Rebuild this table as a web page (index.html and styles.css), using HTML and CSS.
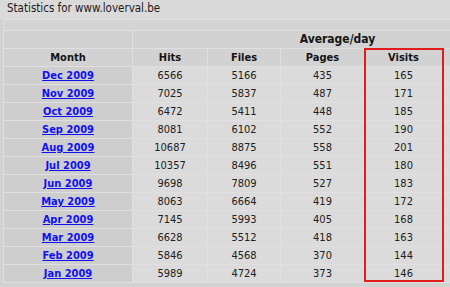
FILE: index.html
```html
<!DOCTYPE html>
<html>
<head>
<meta charset="utf-8">
<link rel="stylesheet" href="styles.css">
</head>
<body>
<div class="page">
  <div class="title">Statistics for www.loverval.be</div>
  <table class="stats">
    <colgroup>
      <col class="c-month"><col class="c-hits"><col class="c-files"><col class="c-pages"><col class="c-visits"><col class="c-extra">
    </colgroup>
    <tr class="r-top"><th colspan="6"></th></tr>
    <tr class="r-group">
      <th class="month-h"></th>
      <th colspan="5" class="group">Average/day</th>
    </tr>
    <tr class="r-head">
      <th class="month-h">Month</th>
      <th>Hits</th>
      <th>Files</th>
      <th>Pages</th>
      <th>Visits</th>
      <th></th>
    </tr>
    <tr><td class="m"><a href="#">Dec 2009</a></td><td>6566</td><td>5166</td><td>435</td><td>165</td><td></td></tr>
    <tr><td class="m"><a href="#">Nov 2009</a></td><td>7025</td><td>5837</td><td>487</td><td>171</td><td></td></tr>
    <tr><td class="m"><a href="#">Oct 2009</a></td><td>6472</td><td>5411</td><td>448</td><td>185</td><td></td></tr>
    <tr><td class="m"><a href="#">Sep 2009</a></td><td>8081</td><td>6102</td><td>552</td><td>190</td><td></td></tr>
    <tr><td class="m"><a href="#">Aug 2009</a></td><td>10687</td><td>8875</td><td>558</td><td>201</td><td></td></tr>
    <tr><td class="m"><a href="#">Jul 2009</a></td><td>10357</td><td>8496</td><td>551</td><td>180</td><td></td></tr>
    <tr><td class="m"><a href="#">Jun 2009</a></td><td>9698</td><td>7809</td><td>527</td><td>183</td><td></td></tr>
    <tr><td class="m"><a href="#">May 2009</a></td><td>8063</td><td>6664</td><td>419</td><td>172</td><td></td></tr>
    <tr><td class="m"><a href="#">Apr 2009</a></td><td>7145</td><td>5993</td><td>405</td><td>168</td><td></td></tr>
    <tr><td class="m"><a href="#">Mar 2009</a></td><td>6628</td><td>5512</td><td>418</td><td>163</td><td></td></tr>
    <tr><td class="m"><a href="#">Feb 2009</a></td><td>5846</td><td>4568</td><td>370</td><td>144</td><td></td></tr>
    <tr><td class="m"><a href="#">Jan 2009</a></td><td>5989</td><td>4724</td><td>373</td><td>146</td><td></td></tr>
  </table>
  <div class="highlight"></div>
</div>
</body>
</html>
```
FILE: styles.css
```css
html, body {
  margin: 0;
  padding: 0;
  overflow: hidden;
  background: #d2d2d2;
}
body {
  width: 450px;
  height: 287px;
  font-family: "DejaVu Sans", sans-serif;
  font-stretch: condensed;
  color: #1e1e1e;
}
.page {
  position: relative;
  width: 450px;
  height: 287px;
  overflow: hidden;
}
.title {
  height: 19px;
  line-height: 17px;
  padding-left: 7px;
  font-size: 11.5px;
  color: #1a1a1a;
  background: #dadada;
  white-space: nowrap;
}
.stats {
  margin-left: 3px;
  border-collapse: separate;
  border-spacing: 1px;
  table-layout: fixed;
  width: 540px;
  background: #e0e0e0;
  font-size: 11px;
}
.c-month { width: 128px; }
.c-hits { width: 74px; }
.c-files { width: 72px; }
.c-pages { width: 83px; }
.c-visits { width: 77px; }
.c-extra { width: 99px; }
.stats th, .stats td {
  padding: 0;
  height: 17px;
  line-height: 17px;
  text-align: center;
  white-space: nowrap;
}
.stats th {
  background: #d2d2d2;
  font-weight: bold;
  color: #141414;
}
.r-top th {
  height: 10px;
  line-height: 10px;
  background: #d4d4d4;
}
.group {
  font-size: 12px;
}
.month-h {
  background: #cfcfcf;
}
.stats td {
  background: #dbdbdb;
  color: #202020;
}
.stats td.m {
  background: #cecece;
}
.m a {
  color: #1010f2;
  font-weight: bold;
  text-decoration: underline;
}
.highlight {
  position: absolute;
  left: 364px;
  top: 48px;
  width: 80px;
  height: 234px;
  box-sizing: border-box;
  border: 2px solid #e41b1b;
}
```
